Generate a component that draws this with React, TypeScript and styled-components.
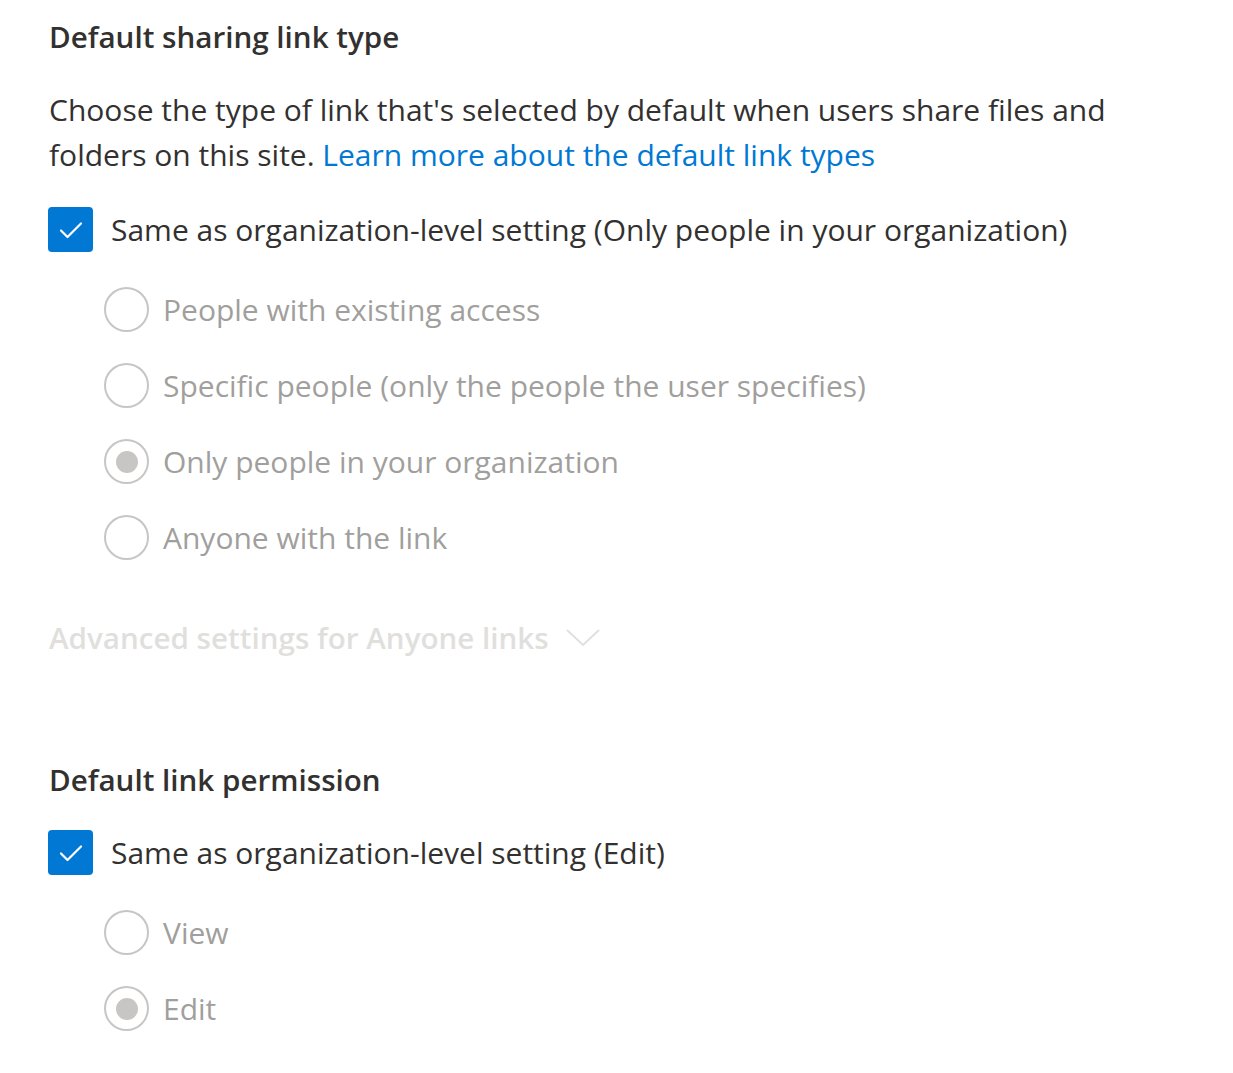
import React from "react";
import styled, { createGlobalStyle } from "styled-components";

const Global = createGlobalStyle`
  html, body { margin: 0; padding: 0; background: #ffffff; }
  body { font-family: "Open Sans", "Noto Sans", sans-serif; color: #323130; }
`;

const Page = styled.div`
  padding: 16px 48px 0 48px;
  display: flex;
  flex-direction: column;
`;

const Section = styled.section<{ $gap?: number }>`
  display: flex;
  flex-direction: column;
  margin-bottom: ${(p) => p.$gap ?? 0}px;
`;

const Heading = styled.h2`
  margin: 0 0 0 1px;
  font-size: 29.6px;
  line-height: 42px;
  font-weight: 600;
  color: #323130;
`;

const Description = styled.p`
  margin: 29px 0 0 1px;
  font-size: 30px;
  line-height: 45px;
  color: #323130;
  max-width: 1090px;
`;

const Link = styled.a`
  color: #0078d4;
  text-decoration: none;
`;

const CheckRow = styled.label`
  display: flex;
  align-items: center;
  gap: 18px;
  font-size: 30px;
  line-height: 45px;
  color: #323130;
`;

const CheckBox = styled.span`
  width: 45px;
  height: 45px;
  border-radius: 4px;
  background: #0078d4;
  display: flex;
  align-items: center;
  justify-content: center;
  flex-shrink: 0;
`;

const RadioList = styled.div`
  display: flex;
  flex-direction: column;
  gap: 31px;
  padding-left: 56px;
`;

const RadioRow = styled.label`
  display: flex;
  align-items: center;
  gap: 14px;
  font-size: 30px;
  line-height: 45px;
  color: #a19f9d;
`;

const RadioCircle = styled.span<{ $checked?: boolean }>`
  width: 45px;
  height: 45px;
  box-sizing: border-box;
  border-radius: 50%;
  border: 2px solid #c8c6c4;
  display: flex;
  align-items: center;
  justify-content: center;
  flex-shrink: 0;
  &::after {
    content: "";
    width: 22px;
    height: 22px;
    border-radius: 50%;
    background: ${(p) => (p.$checked ? "#c8c6c4" : "transparent")};
  }
`;

const Advanced = styled.div`
  display: flex;
  align-items: center;
  gap: 17px;
  font-size: 29.6px;
  line-height: 45px;
  font-weight: 600;
  color: #e1dfdd;
  margin: 55px 0 0 1px;
`;

const CheckRowWrap = styled.div<{ $top?: number }>`
  margin: ${(p) => p.$top ?? 30}px 0 35px 0;
`;

const Check = () => (
  <svg width="26" height="26" viewBox="0 0 26 26" fill="none">
    <path d="M3 13.5 L9.5 20 L23 6.5" stroke="#ffffff" strokeWidth="2.2" strokeLinecap="round" strokeLinejoin="round" />
  </svg>
);

const Chevron = () => (
  <svg width="34" height="22" viewBox="0 0 34 22" fill="none">
    <path d="M1 3 L17 18 L33 3" stroke="#e1dfdd" strokeWidth="1.8" />
  </svg>
);

type Opt = { label: string; checked?: boolean };

const Radios = ({ options }: { options: Opt[] }) => (
  <RadioList>
    {options.map((o) => (
      <RadioRow key={o.label}>
        <RadioCircle $checked={o.checked} />
        {o.label}
      </RadioRow>
    ))}
  </RadioList>
);

export default function App() {
  return (
    <>
      <Global />
      <Page>
        <Section $gap={99}>
          <Heading>Default sharing link type</Heading>
          <Description>
            Choose the type of link that's selected by default when users share files and folders on this site.{" "}
            <Link href="#">Learn more about the default link types</Link>
          </Description>
          <CheckRowWrap>
            <CheckRow>
              <CheckBox>
                <Check />
              </CheckBox>
              Same as organization-level setting (Only people in your organization)
            </CheckRow>
          </CheckRowWrap>
          <Radios
            options={[
              { label: "People with existing access" },
              { label: "Specific people (only the people the user specifies)" },
              { label: "Only people in your organization", checked: true },
              { label: "Anyone with the link" },
            ]}
          />
          <Advanced>
            Advanced settings for Anyone links
            <Chevron />
          </Advanced>
        </Section>
        <Section>
          <Heading>Default link permission</Heading>
          <CheckRowWrap $top={29}>
            <CheckRow>
              <CheckBox>
                <Check />
              </CheckBox>
              Same as organization-level setting (Edit)
            </CheckRow>
          </CheckRowWrap>
          <Radios options={[{ label: "View" }, { label: "Edit", checked: true }]} />
        </Section>
      </Page>
    </>
  );
}
